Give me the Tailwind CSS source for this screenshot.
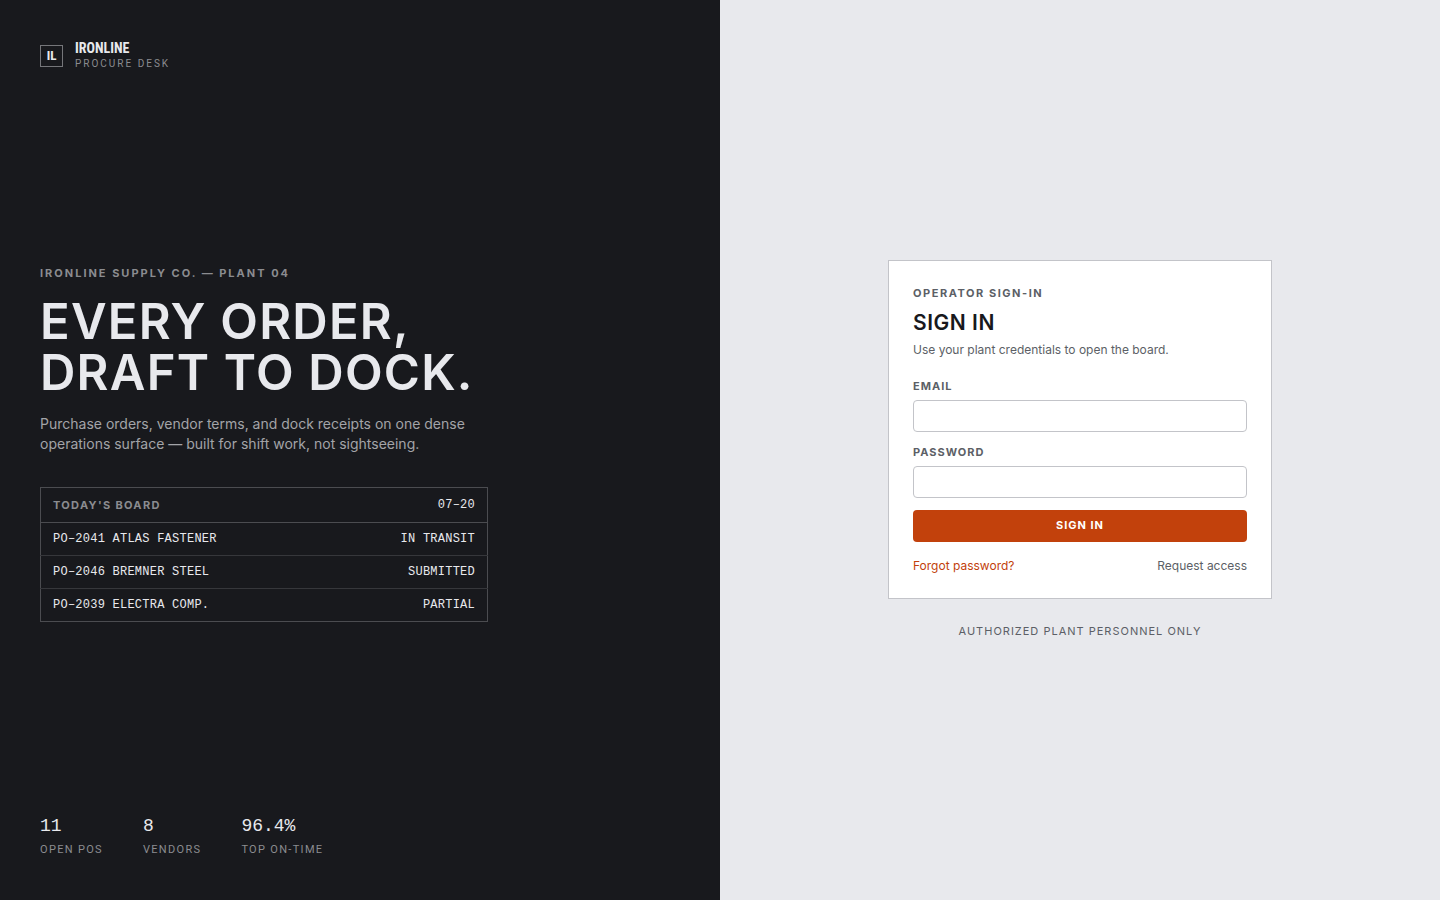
<!DOCTYPE html>
<html lang="en">
<head>
  <meta charset="UTF-8">
  <meta name="viewport" content="width=device-width, initial-scale=1.0">
  <title>Ironline Procure Desk - Sign in</title>
  <script src="https://cdn.jsdelivr.net/npm/@tailwindcss/browser@4"></script>
</head>
<body class="bg-[#e8e9ed] font-['Inter',sans-serif] text-[#18191d]">
<div class="grid grid-cols-2 min-h-screen">
  <section class="bg-[#18191d] text-[#e8e9ed] p-10 flex flex-col justify-between">
    <header class="flex items-end gap-3">
      <div class="w-[23px] h-[22px] mb-[5px] border border-[#75767a] flex items-center justify-center font-['Roboto_Condensed','Roboto',sans-serif] text-[13px] font-bold">IL</div>
      <div>
        <p class="font-['Roboto_Condensed','Roboto',sans-serif] text-sm leading-4 font-bold">IRONLINE</p>
        <p class="font-['Roboto',sans-serif] text-[10px] leading-4 tracking-[2px] text-[#8b8c90]">PROCURE DESK</p>
      </div>
    </header>

    <div class="max-w-[448px] pt-0.5">
      <p class="text-[11px] leading-[18px] font-bold tracking-[2px] text-[#8b8c90]">IRONLINE SUPPLY CO. — PLANT 04</p>
      <h1 class="mt-[14px] text-[49px] leading-[51px] font-semibold tracking-wide whitespace-nowrap">EVERY ORDER,<br>DRAFT TO DOCK.</h1>
      <p class="mt-4 text-sm leading-5 text-[#a3a4a8]">Purchase orders, vendor terms, and dock receipts on one dense operations surface — built for shift work, not sightseeing.</p>
      <table class="mt-[33px] w-full border border-[#4b4c50] font-['Liberation_Mono',monospace] text-xs leading-4 tracking-[0.02em]">
        <thead>
        <tr class="border-b border-[#4b4c50]">
          <th class="px-3 py-[9px] text-left font-['Inter',sans-serif] text-[11px] leading-4 font-bold tracking-[0.12em] text-[#8b8c90]">TODAY'S BOARD</th>
          <th class="px-3 py-[9px] text-right font-normal">07–20</th>
        </tr>
        </thead>
        <tbody>
        <tr class="border-b border-[#36373b]">
          <td class="px-3 py-2">PO–2041 ATLAS FASTENER</td>
          <td class="px-3 py-2 text-right">IN TRANSIT</td>
        </tr>
        <tr class="border-b border-[#36373b]">
          <td class="px-3 py-2">PO–2046 BREMNER STEEL</td>
          <td class="px-3 py-2 text-right">SUBMITTED</td>
        </tr>
        <tr>
          <td class="px-3 py-2">PO–2039 ELECTRA COMP.</td>
          <td class="px-3 py-2 text-right">PARTIAL</td>
        </tr>
        </tbody>
      </table>
    </div>

    <dl class="flex gap-10">
      <div class="flex flex-col-reverse">
        <dt class="font-['Roboto',sans-serif] text-[11px] leading-5 tracking-[0.12em] text-[#8b8c90]">OPEN POS</dt>
        <dd class="font-['Liberation_Mono',monospace] text-lg leading-7">11</dd>
      </div>
      <div class="flex flex-col-reverse">
        <dt class="font-['Roboto',sans-serif] text-[11px] leading-5 tracking-[0.12em] text-[#8b8c90]">VENDORS</dt>
        <dd class="font-['Liberation_Mono',monospace] text-lg leading-7">8</dd>
      </div>
      <div class="flex flex-col-reverse">
        <dt class="font-['Roboto',sans-serif] text-[11px] leading-5 tracking-[0.12em] text-[#8b8c90]">TOP ON-TIME</dt>
        <dd class="font-['Liberation_Mono',monospace] text-lg leading-7">96.4%</dd>
      </div>
    </dl>
  </section>

  <main class="flex flex-col items-center justify-center px-6 pt-6 pb-[26px]">
    <div class="w-full max-w-96 bg-white border border-[#c3c4c9] p-6">
      <p class="text-[11px] leading-4 font-bold tracking-[0.14em] text-[#5c5f66]">OPERATOR SIGN-IN</p>
      <h2 class="mt-2 text-[21px] leading-7 font-semibold tracking-wide">SIGN IN</h2>
      <p class="mt-[3px] text-xs leading-5 text-[#5c5f66]">Use your plant credentials to open the board.</p>
      <form class="mt-[18px] flex flex-col gap-3">
        <div class="flex flex-col gap-1.5">
          <label for="email" class="text-[11px] leading-4 font-bold tracking-[1px] text-[#5c5f66]">EMAIL</label>
          <input type="email" id="email" class="h-8 w-full border border-[#c3c4c9] rounded px-2 text-sm">
        </div>
        <div class="flex flex-col gap-1.5">
          <label for="password" class="text-[11px] leading-4 font-bold tracking-[1px] text-[#5c5f66]">PASSWORD</label>
          <input type="password" id="password" class="h-8 w-full border border-[#c3c4c9] rounded px-2 text-sm">
        </div>
        <button type="submit" class="h-8 w-full rounded bg-[#c2410c] pb-px text-[11px] font-bold tracking-[1px] text-white">SIGN IN</button>
      </form>
      <div class="mt-4 flex justify-between text-xs">
        <a href="#" class="text-[#c2410c]">Forgot password?</a>
        <a href="#" class="text-[#5c5f66]">Request access</a>
      </div>
    </div>
    <p class="mt-6 text-[11px] leading-4 tracking-[1px] text-[#5c5f66]">AUTHORIZED PLANT PERSONNEL ONLY</p>
  </main>
</div>
</body>
</html>
